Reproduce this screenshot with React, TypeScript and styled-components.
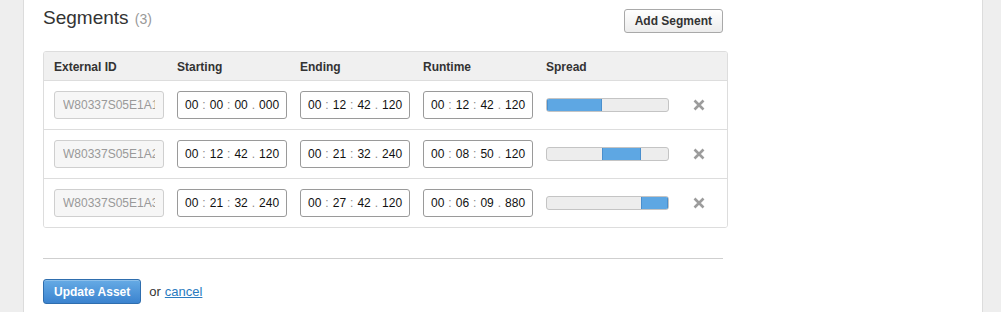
import styled, { createGlobalStyle } from "styled-components";

const GlobalStyle = createGlobalStyle`
  html, body {
    margin: 0;
    padding: 0;
    background: #eeeeee;
    font-family: "Liberation Sans", Arial, sans-serif;
    color: #333;
  }
`;

interface Segment {
  id: string;
  start: string;
  end: string;
  runtime: string;
  offset: number;
  width: number;
}

const segments: Segment[] = [
  { id: "W80337S05E1A1", start: "00:00:00.000", end: "00:12:42.120", runtime: "00:12:42.120", offset: 0, width: 0.4585 },
  { id: "W80337S05E1A2", start: "00:12:42.120", end: "00:21:32.240", runtime: "00:08:50.120", offset: 0.4585, width: 0.319 },
  { id: "W80337S05E1A3", start: "00:21:32.240", end: "00:27:42.120", runtime: "00:06:09.880", offset: 0.7775, width: 0.2225 },
];

const Page = styled.div`
  margin-left: 23px;
  width: 960px;
  min-height: 312px;
  background: #fff;
  border-left: 1px solid #dcdcdc;
  border-right: 1px solid #dcdcdc;
  padding: 9px 0 0 19px;
  box-sizing: border-box;
`;

const Header = styled.div`
  display: flex;
  justify-content: space-between;
  align-items: flex-start;
  width: 680px;
  height: 24px;
`;

const Title = styled.h2`
  margin: -3px 0 0;
  font-size: 19px;
  font-weight: normal;
  line-height: 24px;
  color: #333;
`;

const Count = styled.span`
  font-size: 14px;
  color: #999;
  margin-left: 1px;
`;

const Button = styled.button<{ $primary?: boolean }>`
  font-family: "Liberation Sans", Arial, sans-serif;
  font-size: 12px;
  font-weight: bold;
  height: ${(p) => (p.$primary ? "25px" : "24px")};
  padding: 0 10px;
  border-radius: 3px;
  cursor: pointer;
  color: ${(p) => (p.$primary ? "#fff" : "#333")};
  border: 1px solid ${(p) => (p.$primary ? "#2f6eae" : "#a9a9a9")};
  background: ${(p) =>
    p.$primary
      ? "linear-gradient(#66abe5, #3b83cf)"
      : "linear-gradient(#ffffff, #ececec)"};
  box-shadow: ${(p) => (p.$primary ? "inset 0 1px 0 rgba(255,255,255,0.25)" : "none")};
`;

const Table = styled.div`
  margin-top: 18px;
  width: 685px;
  box-sizing: border-box;
  border: 1px solid #dddddd;
  border-radius: 3px;
  overflow: hidden;
`;

const Row = styled.div<{ $head?: boolean }>`
  display: grid;
  grid-template-columns: 123px 123px 123px 123px 123px 1fr;
  align-items: center;
  padding: 0 10px;
  height: ${(p) => (p.$head ? "28px" : "48px")};
  background: ${(p) => (p.$head ? "#f0f0f0" : "#fff")};
  border-top: ${(p) => (p.$head ? "none" : "1px solid #dddddd")};
`;

const HeadCell = styled.div`
  font-size: 12px;
  font-weight: bold;
  color: #333;
  padding-top: 1px;
`;

const IdInput = styled.input`
  box-sizing: border-box;
  width: 110px;
  height: 28px;
  padding: 0 8px;
  border: 1px solid #cfcfcf;
  border-radius: 3px;
  background: #f6f6f6;
  color: #999;
  font-family: "Liberation Sans", Arial, sans-serif;
  font-size: 12px;
  outline: none;
`;

const TimeBox = styled.div`
  box-sizing: border-box;
  width: 110px;
  height: 28px;
  padding: 0 0 0 7px;
  border: 1px solid #9a9a9a;
  border-radius: 3px;
  background: #fff;
  display: flex;
  align-items: center;
  font-size: 12px;
  color: #111;
  white-space: nowrap;
`;

const Sep = styled.span`
  color: #888;
  padding: 0 4px;
`;

const Track = styled.div`
  position: relative;
  width: 123px;
  height: 14px;
  box-sizing: border-box;
  border: 1px solid #c4c4c4;
  border-radius: 3px;
  background: #ededed;
  overflow: hidden;
`;

const Fill = styled.div`
  position: absolute;
  top: -1px;
  bottom: -1px;
  background: #5ea7e3;
  border: 1px solid #4a8fcd;
  box-sizing: border-box;
`;

const Remove = styled.button`
  margin-left: 24px;
  width: 12px;
  height: 12px;
  padding: 0;
  border: none;
  background: none;
  cursor: pointer;
  display: flex;
`;

const Divider = styled.hr`
  margin: 30px 0 0;
  border: none;
  border-top: 1px solid #cfcfcf;
  width: 680px;
`;

const Footer = styled.div`
  display: flex;
  align-items: center;
  margin-top: 20px;
  font-size: 13px;
  color: #333;
`;

const Or = styled.span`
  margin-left: 8px;
`;

const Cancel = styled.a`
  margin-left: 4px;
  color: #2a7bc0;
  text-decoration: underline;
  cursor: pointer;
`;

const Timecode = ({ value }: { value: string }) => {
  const [h, m, rest] = value.split(":");
  const [s, ms] = rest.split(".");
  return (
    <TimeBox>
      {h}
      <Sep>:</Sep>
      {m}
      <Sep>:</Sep>
      {s}
      <Sep>.</Sep>
      {ms}
    </TimeBox>
  );
};

const XIcon = () => (
  <svg width="12" height="12" viewBox="0 0 12 12">
    <path d="M1.5 1.5 L10.5 10.5 M10.5 1.5 L1.5 10.5" stroke="#9c9c9c" strokeWidth="2.6" />
  </svg>
);

const App = () => {
  return (
    <>
      <GlobalStyle />
      <Page>
        <Header>
          <Title>
            Segments <Count>(3)</Count>
          </Title>
          <Button>Add Segment</Button>
        </Header>
        <Table>
          <Row $head>
            <HeadCell>External ID</HeadCell>
            <HeadCell>Starting</HeadCell>
            <HeadCell>Ending</HeadCell>
            <HeadCell>Runtime</HeadCell>
            <HeadCell>Spread</HeadCell>
            <div />
          </Row>
          {segments.map((seg) => (
            <Row key={seg.id}>
              <IdInput readOnly defaultValue={seg.id} />
              <Timecode value={seg.start} />
              <Timecode value={seg.end} />
              <Timecode value={seg.runtime} />
              <Track>
                <Fill style={{ left: `${seg.offset * 100}%`, width: `${seg.width * 100}%` }} />
              </Track>
              <Remove aria-label="Remove">
                <XIcon />
              </Remove>
            </Row>
          ))}
        </Table>
        <Divider />
        <Footer>
          <Button $primary>Update Asset</Button>
          <Or>or</Or>
          <Cancel>cancel</Cancel>
        </Footer>
      </Page>
    </>
  );
};

export default App;
